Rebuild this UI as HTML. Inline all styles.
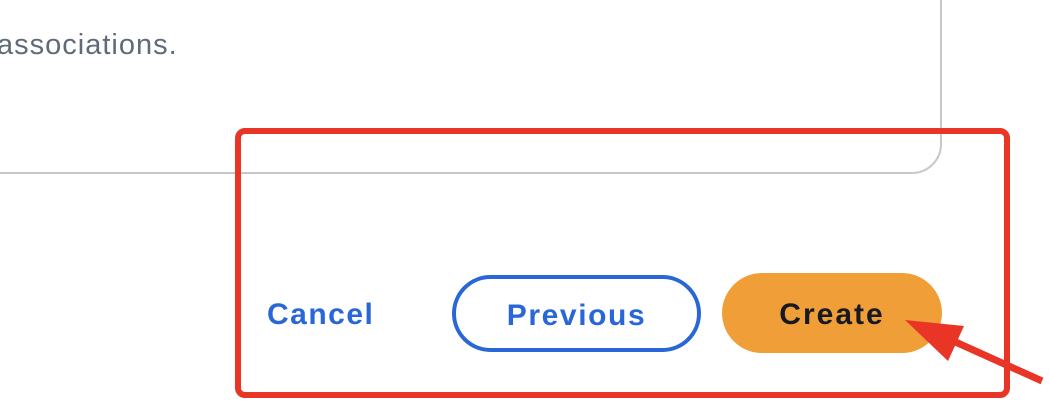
<!DOCTYPE html>
<html><head><style>
body{margin:0;width:1049px;height:416px;background:#fff;position:relative;overflow:hidden;font-family:"Liberation Sans",sans-serif}
.card{position:absolute;left:-40px;top:-40px;width:978px;height:210px;border:2px solid #c6c6cd;border-radius:0 0 30px 0}
.txt{position:absolute;left:-3px;top:29px;font-size:29px;letter-spacing:1px;color:#5f6b7a}
.red{position:absolute;left:235px;top:128px;width:763px;height:258px;border:6px solid #e93526;border-radius:10px}
.cancel{position:absolute;left:267px;top:298px;font-size:30px;font-weight:bold;color:#2a67d6;letter-spacing:1.5px}
.prev{position:absolute;left:452px;top:275px;width:241px;height:69px;border:4px solid #2a67d6;border-radius:40px;box-sizing:content-box;color:#2a67d6;font-weight:bold;font-size:30px;letter-spacing:1.6px;text-align:center;line-height:73px}
.create{position:absolute;left:722px;top:273px;width:220px;height:80px;background:#f09e38;border-radius:40px;color:#16191f;font-weight:bold;font-size:30px;letter-spacing:2px;text-align:center;line-height:84px}
</style></head><body>
<div class="card"></div>
<div class="txt">associations.</div>
<div class="red"></div>
<div class="cancel">Cancel</div>
<div class="prev">Previous</div>
<div class="create">Create</div>
<svg style="position:absolute;left:0;top:0" width="1049" height="416">
<line x1="1042" y1="381" x2="940" y2="335" stroke="#e93526" stroke-width="7"/>
<polygon points="905,320 964,326 948,361" fill="#e93526"/>
</svg>
</body></html>
